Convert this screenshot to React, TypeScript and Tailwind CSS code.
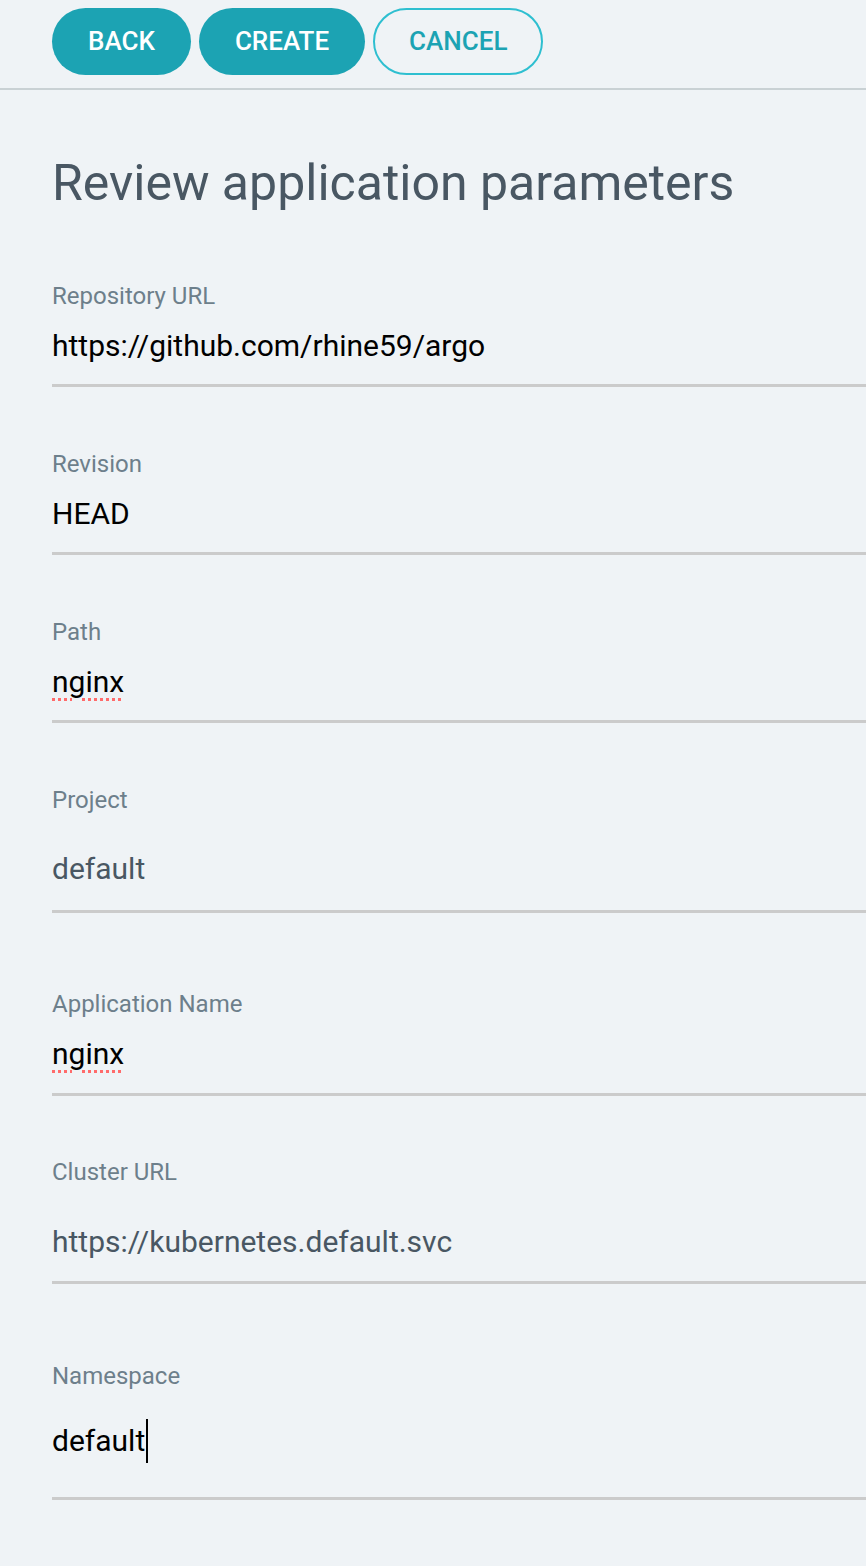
import React from "react";

const font = { fontFamily: "Roboto, 'Liberation Sans', sans-serif" };

function Field({
  label,
  value,
  mt,
  gap,
  pb,
  select,
  squiggle,
  caret,
}: {
  label: string;
  value: string;
  mt: string;
  gap: string;
  pb: string;
  select?: boolean;
  squiggle?: boolean;
  caret?: boolean;
}) {
  return (
    <div className={mt}>
      <div className="text-[24px] leading-[28px] text-[#6d7f8b]">{label}</div>
      <div className={`${gap} ${pb} border-b-[3px] border-[#cbcbcb] -mr-[40px]`}>
        <div
          className={`h-[36px] text-[30px] leading-[36px] flex items-center ${select ? "text-[#495763]" : "text-black"}`}
        >
          <span
            className={
              squiggle
                ? "underline decoration-dotted decoration-[#ff6b6b] decoration-[3px] underline-offset-[6px]"
                : ""
            }
          >
            {value}
          </span>
          {caret && <span className="inline-block w-[2px] h-[44px] bg-black ml-[1px] shrink-0" />}
        </div>
      </div>
    </div>
  );
}

export default function App() {
  return (
    <div className="min-h-[1566px] w-full bg-[#eff3f6] overflow-hidden" style={font}>
      <div className="h-[90px] border-b-2 border-[#c9d1d4] pl-[52px] pt-[8px] flex gap-2 items-start">
        <button className="h-[67px] px-[36px] rounded-full bg-[#1ca3b3] text-white text-[26px] font-medium">
          BACK
        </button>
        <button className="h-[67px] px-[36px] rounded-full bg-[#1ca3b3] text-white text-[26px] font-medium">
          CREATE
        </button>
        <button className="h-[67px] px-[34px] rounded-full border-2 border-[#2ebfd0] text-[#1ca3b3] text-[26px] font-medium">
          CANCEL
        </button>
      </div>
      <div className="pl-[52px]">
        <h1 className="mt-[64px] text-[50px] leading-[58px] text-[#495763] font-normal">
          Review application parameters
        </h1>
        <Field label="Repository URL" value="https://github.com/rhine59/argo" mt="mt-[70px]" gap="mt-[18px]" pb="pb-[20px]" />
        <Field label="Revision" value="HEAD" mt="mt-[63px]" gap="mt-[18px]" pb="pb-[20px]" />
        <Field label="Path" value="nginx" mt="mt-[63px]" gap="mt-[18px]" pb="pb-[20px]" squiggle />
        <Field label="Project" value="default" mt="mt-[63px]" gap="mt-[37px]" pb="pb-[23px]" select />
        <Field label="Application Name" value="nginx" mt="mt-[77px]" gap="mt-[18px]" pb="pb-[21px]" squiggle />
        <Field label="Cluster URL" value="https://kubernetes.default.svc" mt="mt-[62px]" gap="mt-[38px]" pb="pb-[21px]" select />
        <Field label="Namespace" value="default" mt="mt-[78px]" gap="mt-[33px]" pb="pb-[38px]" caret />
      </div>
    </div>
  );
}
